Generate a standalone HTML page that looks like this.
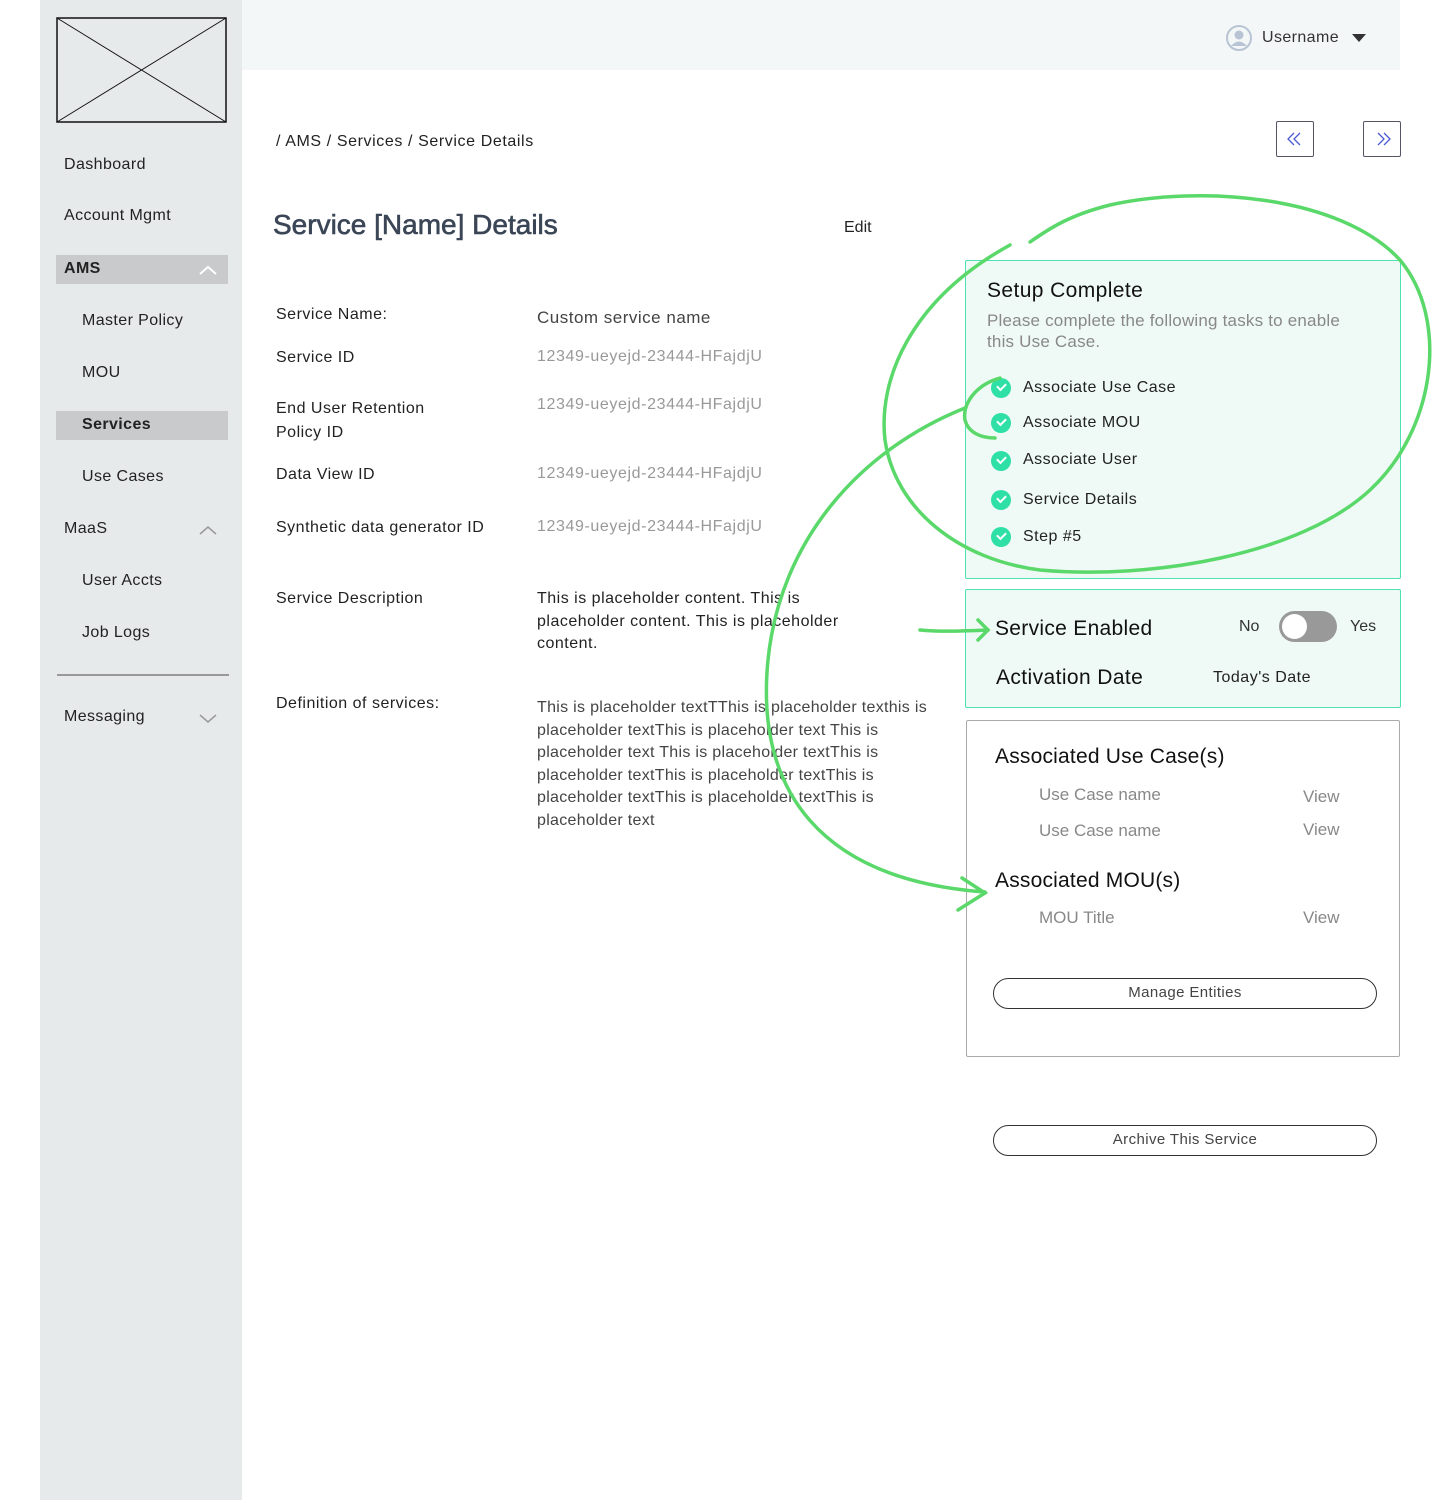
<!DOCTYPE html>
<html><head><meta charset="utf-8"><style>
*{margin:0;padding:0;box-sizing:border-box}
body{width:1440px;height:1500px;position:relative;background:#fff;font-family:"Liberation Sans",sans-serif;color:#222;overflow:hidden}
.a{position:absolute;white-space:nowrap}
.side{left:40px;top:0;width:202px;height:1500px;background:#e7eaeb}
.top{left:242px;top:0;width:1158px;height:70px;background:#f4f7f8}
.nav{font-size:16px;color:#222;letter-spacing:.4px}
.sel{background:#c9cacc;left:56px;width:172px;height:29px}
.lab{font-size:16px;color:#222;left:276px;letter-spacing:.5px}
.val{font-size:16px;color:#999;left:537px;letter-spacing:.6px}
.gbox{background:#effaf7;border:1.5px solid #4fe0b4;border-radius:2px}
.chk{width:20px;height:20px;border-radius:50%;background:#2fe0a6;left:991px}
.chk:after{content:"";position:absolute;left:6px;top:5px;width:7px;height:4px;border-left:2px solid #fff;border-bottom:2px solid #fff;transform:rotate(-45deg)}
.ti{font-size:16px;left:1023px;color:#222;letter-spacing:.5px}
.btn{border:1.5px solid #333;border-radius:16px;height:31px;font-size:15px;color:#444;text-align:center;line-height:28px;letter-spacing:.4px}
</style></head><body>
<div class="a side"></div>
<div class="a top"></div>
<svg class="a" style="left:56px;top:17px" width="171" height="106"><rect x="1" y="1" width="169" height="104" fill="none" stroke="#111" stroke-width="1.5"/><line x1="1" y1="1" x2="170" y2="105" stroke="#111"/><line x1="170" y1="1" x2="1" y2="105" stroke="#111"/></svg>
<div class="a nav" style="left:64px;top:156px">Dashboard</div>
<div class="a nav" style="left:64px;top:207px">Account Mgmt</div>
<div class="a sel" style="top:255px"></div>
<div class="a nav" style="left:64px;top:260px;font-weight:bold">AMS</div>
<svg class="a" style="left:199px;top:264px" width="18" height="12"><path d="M1 10 L9 3 L17 10" fill="none" stroke="#fff" stroke-width="2"/></svg>
<div class="a nav" style="left:82px;top:312px">Master Policy</div>
<div class="a nav" style="left:82px;top:364px">MOU</div>
<div class="a sel" style="top:411px"></div>
<div class="a nav" style="left:82px;top:416px;font-weight:bold">Services</div>
<div class="a nav" style="left:82px;top:468px">Use Cases</div>
<div class="a nav" style="left:64px;top:520px">MaaS</div>
<svg class="a" style="left:199px;top:524px" width="18" height="12"><path d="M1 10 L9 3 L17 10" fill="none" stroke="#999" stroke-width="1.5"/></svg>
<div class="a nav" style="left:82px;top:572px">User Accts</div>
<div class="a nav" style="left:82px;top:624px">Job Logs</div>
<div class="a" style="left:57px;top:674px;width:172px;height:2px;background:#999"></div>
<div class="a nav" style="left:64px;top:708px">Messaging</div>
<svg class="a" style="left:199px;top:712px" width="18" height="12"><path d="M1 3 L9 10 L17 3" fill="none" stroke="#999" stroke-width="1.5"/></svg>

<svg class="a" style="left:1225px;top:24px" width="28" height="28"><circle cx="14" cy="14" r="12" fill="none" stroke="#b8c4d4" stroke-width="2"/><circle cx="14" cy="11" r="4.5" fill="#b8c4d4"/><path d="M6 22 Q14 13 22 22" fill="#b8c4d4"/></svg>
<div class="a" style="left:1262px;top:29px;font-size:16px;color:#333;letter-spacing:.4px">Username</div>
<svg class="a" style="left:1352px;top:33px" width="14" height="10"><path d="M0 1 L14 1 L7 9Z" fill="#333"/></svg>

<div class="a" style="left:276px;top:133px;font-size:16px;color:#222;letter-spacing:.6px">/ AMS / Services / Service Details</div>
<div class="a" style="left:1276px;top:121px;width:38px;height:36px;border:1.5px solid #556;border-radius:2px"></div>
<svg class="a" style="left:1286px;top:131px" width="18" height="16" fill="none" stroke="#4a5ad0" stroke-width="1.3"><path d="M8 2 L2 8 L8 14 M14 2 L8 8 L14 14"/></svg>
<div class="a" style="left:1363px;top:121px;width:38px;height:36px;border:1.5px solid #556;border-radius:2px"></div>
<svg class="a" style="left:1374px;top:131px" width="18" height="16" fill="none" stroke="#4a5ad0" stroke-width="1.3"><path d="M4 2 L10 8 L4 14 M10 2 L16 8 L10 14"/></svg>
<div class="a" style="left:273px;top:209px;font-size:28px;color:#3a4556;-webkit-text-stroke:0.6px #3a4556">Service [Name] Details</div>
<div class="a" style="left:844px;top:219px;font-size:16px">Edit</div>

<div class="a lab" style="top:306px">Service Name:</div>
<div class="a" style="left:537px;top:308px;font-size:17px;color:#444;letter-spacing:.5px">Custom service name</div>
<div class="a lab" style="top:349px">Service ID</div>
<div class="a val" style="top:348px">12349-ueyejd-23444-HFajdjU</div>
<div class="a lab" style="top:397px;line-height:24px">End User Retention<br>Policy ID</div>
<div class="a val" style="top:396px">12349-ueyejd-23444-HFajdjU</div>
<div class="a lab" style="top:466px">Data View ID</div>
<div class="a val" style="top:465px">12349-ueyejd-23444-HFajdjU</div>
<div class="a lab" style="top:519px">Synthetic data generator ID</div>
<div class="a val" style="top:518px">12349-ueyejd-23444-HFajdjU</div>
<div class="a lab" style="top:590px">Service Description</div>
<div class="a" style="left:537px;top:588px;font-size:16px;line-height:22.5px;color:#222;letter-spacing:.5px">This is placeholder content. This is<br>placeholder content. This is placeholder<br>content.</div>
<div class="a lab" style="top:695px">Definition of services:</div>
<div class="a" style="left:537px;top:697px;font-size:16px;line-height:22.5px;color:#444;letter-spacing:.3px">This is placeholder textTThis is placeholder texthis is<br>placeholder textThis is placeholder text This is<br>placeholder text This is placeholder textThis is<br>placeholder textThis is placeholder textThis is<br>placeholder textThis is placeholder textThis is<br>placeholder text</div>

<div class="a gbox" style="left:965px;top:260px;width:436px;height:319px"></div>
<div class="a" style="left:987px;top:279px;font-size:21px;color:#111;letter-spacing:.4px">Setup Complete</div>
<div class="a" style="left:987px;top:310px;font-size:17px;line-height:21px;color:#888;letter-spacing:.2px">Please complete the following tasks to enable<br>this Use Case.</div>
<div class="a chk" style="top:378px"></div><div class="a ti" style="top:379px">Associate Use Case</div>
<div class="a chk" style="top:413px"></div><div class="a ti" style="top:414px">Associate MOU</div>
<div class="a chk" style="top:451px"></div><div class="a ti" style="top:451px">Associate User</div>
<div class="a chk" style="top:490px"></div><div class="a ti" style="top:491px">Service Details</div>
<div class="a chk" style="top:527px"></div><div class="a ti" style="top:528px">Step #5</div>

<div class="a gbox" style="left:965px;top:589px;width:436px;height:119px"></div>
<div class="a" style="left:995px;top:617px;font-size:21px;color:#111;letter-spacing:.3px">Service Enabled</div>
<div class="a" style="left:1239px;top:618px;font-size:16px;color:#333">No</div>
<div class="a" style="left:1279px;top:611px;width:58px;height:31px;border-radius:16px;background:#999"></div>
<div class="a" style="left:1282px;top:614px;width:25px;height:25px;border-radius:50%;background:#fff"></div>
<div class="a" style="left:1350px;top:618px;font-size:16px;color:#333">Yes</div>
<div class="a" style="left:996px;top:666px;font-size:21px;color:#111;letter-spacing:.4px">Activation Date</div>
<div class="a" style="left:1213px;top:669px;font-size:16px;color:#222;letter-spacing:.5px">Today's Date</div>

<div class="a" style="left:966px;top:720px;width:434px;height:337px;border:1.5px solid #aaa;border-radius:2px"></div>
<div class="a" style="left:995px;top:745px;font-size:21px;color:#111;letter-spacing:.2px">Associated Use Case(s)</div>
<div class="a" style="left:1039px;top:785px;font-size:17px;color:#888">Use Case name</div>
<div class="a" style="left:1303px;top:787px;font-size:17px;color:#888">View</div>
<div class="a" style="left:1039px;top:821px;font-size:17px;color:#888">Use Case name</div>
<div class="a" style="left:1303px;top:820px;font-size:17px;color:#888">View</div>
<div class="a" style="left:995px;top:869px;font-size:21px;color:#111;letter-spacing:.2px">Associated MOU(s)</div>
<div class="a" style="left:1039px;top:908px;font-size:17px;color:#888">MOU Title</div>
<div class="a" style="left:1303px;top:908px;font-size:17px;color:#888">View</div>
<div class="a btn" style="left:993px;top:978px;width:384px">Manage Entities</div>
<div class="a btn" style="left:993px;top:1125px;width:384px">Archive This Service</div>

<svg class="a" style="left:0;top:0" width="1440" height="1500" fill="none" stroke="#5ad86a" stroke-width="3.5" stroke-linecap="round">
<path d="M1030 242 C1050 228 1070 215 1110 205 C1200 185 1340 195 1400 260 C1450 320 1435 430 1370 490 C1300 555 1150 580 1040 570 C960 560 895 510 885 440 C878 380 910 300 1010 245"/>
<path d="M1000 378 C975 385 962 405 965 420 C968 432 980 438 995 438"/>
<path d="M965 408 C860 450 780 540 768 660 C755 790 820 880 985 892"/>
<path d="M962 878 L985 893 L958 910"/>
<path d="M920 630 C940 632 965 631 988 630"/>
<path d="M978 620 L988 630 L978 640"/>
</svg>
</body></html>
